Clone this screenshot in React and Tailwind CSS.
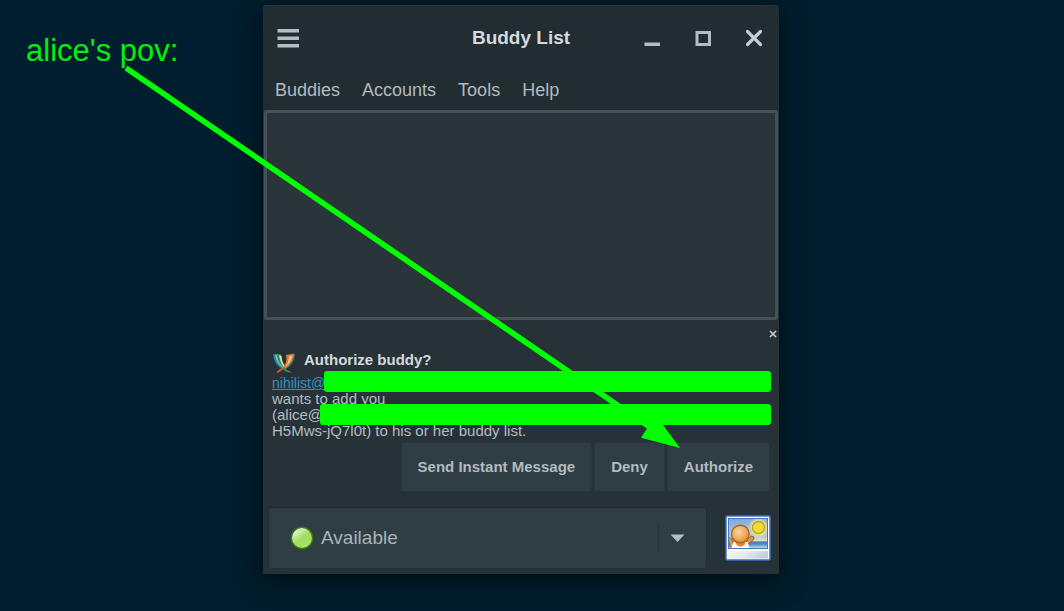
import React from "react";

const MENUS = ["Buddies", "Accounts", "Tools", "Help"];
const ACTIONS = ["Send Instant Message", "Deny", "Authorize"];

function TitleBar() {
  return (
    <header className="grid h-16 grid-cols-[1fr_auto_1fr] items-center px-[13px]">
      <button type="button" aria-label="Menu" className="w-6">
        <svg width="24" height="24" viewBox="0 0 24 24" fill="#b3bec3" aria-hidden="true">
          <rect x="1.500" y="3" width="21.500" height="3.500" />
          <rect x="1.500" y="10.500" width="21.500" height="3.500" />
          <rect x="1.500" y="18" width="21.500" height="3.500" />
        </svg>
      </button>
      <h1 className="text-[19px] font-bold text-[#d3dade]">Buddy List</h1>
      <div className="flex justify-end gap-[27px]">
        <button type="button" aria-label="Minimize">
          <svg width="24" height="24" viewBox="0 0 24 24" aria-hidden="true">
            <rect x="4.500" y="16.500" width="15.500" height="3.500" fill="#b3bec3" />
          </svg>
        </button>
        <button type="button" aria-label="Maximize">
          <svg width="24" height="24" viewBox="0 0 24 24" aria-hidden="true">
            <rect x="6" y="6.500" width="12.500" height="12" fill="none" stroke="#b3bec3" strokeWidth="3" />
          </svg>
        </button>
        <button type="button" aria-label="Close">
          <svg width="24" height="24" viewBox="0 0 24 24" aria-hidden="true">
            <path d="M5.500 5.500l13 13M18.500 5.500l-13 13" stroke="#c3cdd2" strokeWidth="3.200" strokeLinecap="round" />
          </svg>
        </button>
      </div>
    </header>
  );
}

function ProtocolIcon() {
  return (
    <svg width="24" height="22" viewBox="0 0 24 22" aria-hidden="true">
      <path d="M1 2C2 10 5 15 13 18.500L14 16C9 13 7 8 6 3Z" fill="#2584ad" />
      <path d="M3 2.500C4 9 7 14 13 17L14 15C9 11 8 7 7.500 3Z" fill="#72bdd1" />
      <path d="M4.500 1.500L9 2.500C9.500 8 11 12 14 15L13 17C8 13 6 9 4.500 1.500Z" fill="#358e47" />
      <path d="M7 3L9.500 4C10 9 11 12 13 14L12 15.500C9 12 8 8 7 3Z" fill="#d8e399" />
      <path d="M23 2C22 10 18 15 12 18L11 16C15 13 17 8 18 2.500Z" fill="#328b86" />
      <path d="M14 3L22 1.500C21 9 18 14 12 17L11.500 15C14 12 15 8 14 3Z" fill="#e77035" />
      <path d="M17 4L20.500 3.500C19 9 17 12 13 15C16 11 17 8 17 4Z" fill="#f5cf98" />
      <path d="M12 15.500C10 18 8 19.500 5 20.500C7 17.500 9 17 12 15.500Z" fill="#db542b" stroke="#db542b" />
      <path d="M12 15.500C14 18.500 17 19 20 20.500C16 21 13 19.500 10.500 16Z" fill="#3a9b42" />
    </svg>
  );
}

function BuddyPicture() {
  return (
    <svg width="46" height="46" viewBox="0 0 46 46" aria-hidden="true">
      <defs>
        <linearGradient id="sky" x1="0" y1="0" x2="0" y2="1">
          <stop offset="0" stopColor="#7fa9dc" />
          <stop offset="0.600" stopColor="#b5cbdc" />
          <stop offset="0.740" stopColor="#dfe3bd" />
          <stop offset="0.780" stopColor="#4b7db8" />
          <stop offset="0.860" stopColor="#568bc4" />
          <stop offset="1" stopColor="#e2e5ba" />
        </linearGradient>
        <linearGradient id="strip" x1="0" y1="0" x2="1" y2="0.300">
          <stop offset="0" stopColor="#f4f4f2" />
          <stop offset="0.500" stopColor="#e9ebea" />
          <stop offset="1" stopColor="#c2d0de" />
        </linearGradient>
        <radialGradient id="head" cx="0.420" cy="0.380" r="0.650">
          <stop offset="0" stopColor="#fbd49d" />
          <stop offset="0.600" stopColor="#eead5c" />
          <stop offset="1" stopColor="#d58d35" />
        </radialGradient>
        <radialGradient id="glow">
          <stop offset="0.500" stopColor="#edeb8e" />
          <stop offset="1" stopColor="#edeb8e" stopOpacity="0" />
        </radialGradient>
        <clipPath id="photo"><rect x="4" y="4" width="38" height="29" /></clipPath>
      </defs>
      <rect x="1" y="1" width="44" height="44" rx="1" fill="#f8fafc" stroke="#3d73bf" strokeWidth="1.500" />
      <rect x="3.500" y="3.500" width="39" height="30" fill="url(#sky)" stroke="#4579bd" />
      <g clipPath="url(#photo)">
        <circle cx="33.500" cy="12.500" r="11" fill="url(#glow)" />
        <path d="M3 22L7 24L10 32H5Z" fill="#d89850" stroke="#a16321" />
        <path d="M20 29L23 23.500L26 21L29 22L28.500 25L24 28L22 31Z" fill="#d89850" stroke="#a16321" />
        <path d="M6 34L8.500 27L22.500 27L25 34Z" fill="#ffffff" />
        <path d="M10 26H21Q20 31.500 15.500 31.500Q11 31.500 10 26Z" fill="#e38a26" />
        <circle cx="15.300" cy="19" r="8.800" fill="url(#head)" stroke="#a8662b" strokeWidth="1.400" />
        <circle cx="33.500" cy="12.500" r="6" fill="#f0dc36" stroke="#c3a61d" strokeWidth="1.400" />
      </g>
      <rect x="3" y="36" width="40" height="7.500" fill="url(#strip)" />
    </svg>
  );
}

function AuthorizeRequest() {
  return (
    <section className="px-[9px]">
      <div className="-mr-2 flex h-[28px] items-center justify-end">
        <button type="button" aria-label="Dismiss" className="px-px">
          <svg width="8" height="8" viewBox="0 0 8 8" aria-hidden="true">
            <path d="M1 1l6 6M7 1L1 7" stroke="#c5cdd0" strokeWidth="1.600" />
          </svg>
        </button>
      </div>
      <div className="flex h-[27px] items-start gap-2 pt-1">
        <ProtocolIcon />
        <h2 className="text-[15px] leading-[16px] font-bold text-[#d3dade]">Authorize buddy?</h2>
      </div>
      <div className="relative text-[15px] leading-[16px] text-[#b3bdc1]">
        <p>
          <a href="#nihilist" className="text-[14px] text-[#3292c2] underline">nihilist@</a>
          <br />
          wants to add you
          <br />
          (alice@
          <br />
          H5Mws-jQ7l0t) to his or her buddy list.
        </p>
        <span className="absolute -top-1 -right-px left-[52px] h-[21px] rounded-[3px] bg-[#00ff00]" />
        <span className="absolute top-[29px] -right-px left-12 h-[21px] rounded-[3px] bg-[#00ff00]" />
      </div>
      <div className="mt-[3px] flex justify-end gap-0.5">
        {ACTIONS.map((label) => (
          <button
            key={label}
            type="button"
            className="h-[50px] rounded-[3px] border border-[#29353b] bg-[#2f3d44] px-4 text-[15px] font-bold text-[#b1bbc0]"
          >
            {label}
          </button>
        ))}
      </div>
    </section>
  );
}

function StatusBar() {
  return (
    <footer className="mt-[15px] flex items-center gap-[18px] pr-2 pb-[5px] pl-[5px]">
      <div className="grid flex-1 items-center">
        <select
          aria-label="Status"
          className="col-start-1 row-start-1 h-[62px] w-full appearance-none rounded-[3px] border border-[#222d32] bg-[#2f3d44] pl-[52px] text-[19px] text-[#a9b3b8]"
        >
          <option>Available</option>
        </select>
        <svg className="pointer-events-none col-start-1 row-start-1 ml-[22px]" width="24" height="24" viewBox="0 0 24 24" aria-hidden="true">
          <defs>
            <linearGradient id="orb" x1="0.200" y1="0.100" x2="0.800" y2="0.900">
              <stop offset="0" stopColor="#e5f8d4" />
              <stop offset="0.500" stopColor="#9fdd60" />
              <stop offset="1" stopColor="#a8e36b" />
            </linearGradient>
          </defs>
          <circle cx="12" cy="12" r="10.700" fill="url(#orb)" stroke="#3c7415" strokeWidth="1.500" />
        </svg>
        <span className="pointer-events-none col-start-1 row-start-1 flex items-center gap-[11px] justify-self-end pr-[22px]">
          <span className="h-7 w-px bg-[#27343a]" />
          <svg width="15" height="8" viewBox="0 0 15 8" aria-hidden="true">
            <path d="M0.500 0.500H14.500L7.500 8Z" fill="#b3bec3" />
          </svg>
        </span>
      </div>
      <button type="button" aria-label="Buddy icon">
        <BuddyPicture />
      </button>
    </footer>
  );
}

export default function App() {
  return (
    <main className="relative flex min-h-screen items-start overflow-hidden bg-[#001e2e] font-['Liberation_Sans',Arial,sans-serif]">
      <div className="w-[263px] shrink-0 pt-[33px] pl-[26px]">
        <p className="text-[31px] leading-[36px] text-[#00f010]">alice's pov:</p>
      </div>

      <div className="mt-[5px] mb-9 w-[516px] shrink-0 rounded-t-[4px] bg-[#273238] shadow-[0_6px_24px_4px_rgba(0,0,0,0.45)]">
        <div className="rounded-t-[4px] border-t border-[#2b363b] bg-[#222d32]">
          <TitleBar />
          <nav className="flex h-10 items-center gap-[22px] px-3 text-[18px] text-[#b1bbc0]">
            {MENUS.map((name) => (
              <button key={name} type="button">{name}</button>
            ))}
          </nav>
        </div>
        <div className="mx-px h-[210px] rounded-[2px] border-[3px] border-[#455156] bg-[#2a353a]" role="list" aria-label="Buddies" />
        <AuthorizeRequest />
        <StatusBar />
      </div>

      <svg className="pointer-events-none absolute top-0 left-0" width="700" height="460" viewBox="0 0 700 460" aria-hidden="true">
        <path d="M126 68L656 431.500" stroke="#00ff00" strokeWidth="5.600" />
        <path d="M680 448L641 437.700L648 427L656.300 415.300L663 425Z" fill="#00ff00" />
      </svg>
    </main>
  );
}
